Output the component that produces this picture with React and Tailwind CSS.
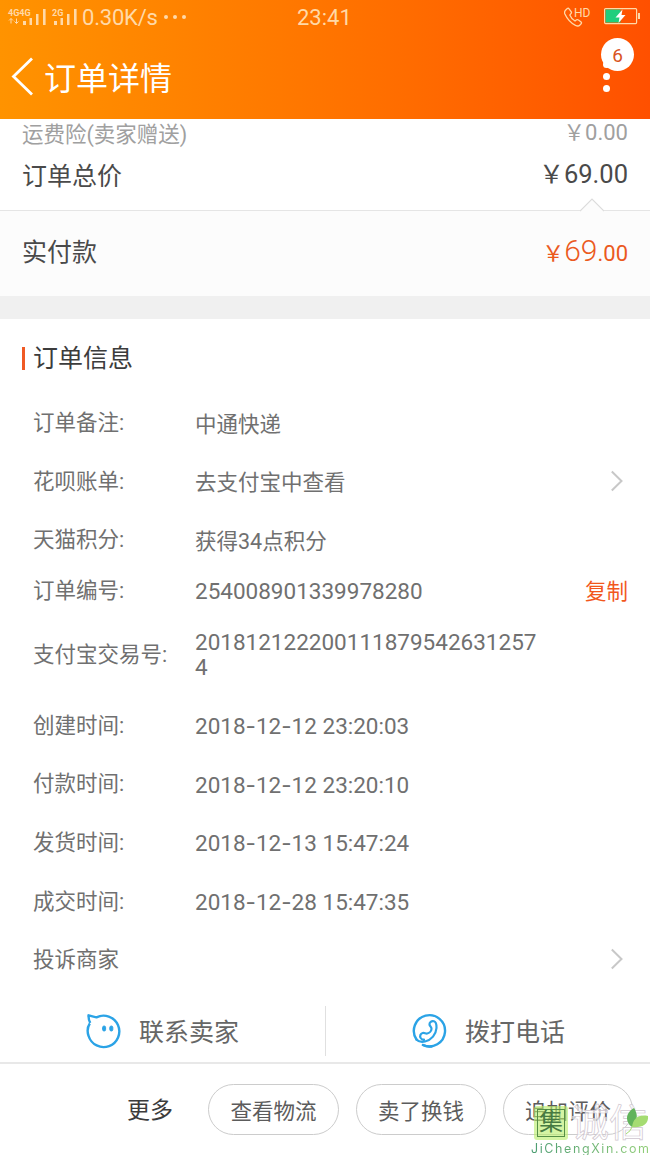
import React from 'react';

const orderRows = [
  { label: '订单备注:', value: '中通快递', height: 'h-[58px]' },
  { label: '花呗账单:', value: '去支付宝中查看', height: 'h-[59px]', arrow: true },
  { label: '天猫积分:', value: '获得34点积分', height: 'h-[58px]' },
  { label: '订单编号:', value: '254008901339978280', height: 'h-11', action: '复制', numeric: true },
  { label: '支付宝交易号:', value: '2018121222001118795426312574', height: 'h-[83px]', numeric: true },
  { label: '创建时间:', value: '2018-12-12 23:20:03', height: 'h-[59px]', numeric: true },
  { label: '付款时间:', value: '2018-12-12 23:20:10', height: 'h-[58px]', numeric: true },
  { label: '发货时间:', value: '2018-12-13 15:47:24', height: 'h-[59px]', numeric: true },
  { label: '成交时间:', value: '2018-12-28 15:47:35', height: 'h-[59px]', numeric: true },
  { label: '投诉商家', value: '', height: 'h-[58px]', arrow: true },
];

const Signal = () => (
  <svg className="w-[23px] h-4" viewBox="0 0 23 16" fill="currentColor">
    <rect x="0" y="12" width="3" height="4" />
    <rect x="6.500" y="9" width="2.500" height="7" />
    <rect x="13" y="5" width="2.500" height="11" />
    <rect x="20" y="0" width="2.600" height="16" />
  </svg>
);

const StatusBar = () => (
  <div className="grid grid-cols-[289px_1fr_78px] h-[34px] items-center text-[#ffd9a8]">
    <div className="flex items-center pl-2">
      <div className="flex flex-col w-[15px] h-4 text-[9px] leading-[8px] font-bold">
        <span className="whitespace-nowrap">4G4G</span>
        <svg className="w-3 h-2" viewBox="0 0 12 8" fill="none" stroke="currentColor" strokeWidth="1">
          <path d="M3 1.500v5M1 3.500l2-2 2 2M8.500 1.500v5M6.500 4.500l2 2 2-2" />
        </svg>
      </div>
      <Signal />
      <div className="flex h-4 ml-[6px]">
        <span className="w-0 text-[9px] leading-[8px] font-bold">2G</span>
        <span className="pl-[2px]"><Signal /></span>
      </div>
      <span className="ml-[5px] text-[22px] whitespace-nowrap tracking-[-0.2px]">0.30K/s</span>
      <span className="flex gap-[5px] ml-[6px]">
        <i className="w-1 h-1 rounded-full bg-current" />
        <i className="w-1 h-1 rounded-full bg-current" />
        <i className="w-1 h-1 rounded-full bg-current" />
      </span>
    </div>
    <div className="pl-2 pt-[1px] text-[22px]">23:41</div>
    <div className="flex -ml-2 items-start gap-[12px]">
      <div className="flex w-[28px] h-5">
        <svg className="w-5 h-5 shrink-0" viewBox="0 0 20 20" fill="none" stroke="currentColor">
          <path
            d="M1.500 3.200L3.300 1.500Q4.300 .8 5.100 1.800l2.200 3.100q.5 1-.4 1.800L5.800 8c1 2.500 2.900 4.700 5.200 6l1.600-1.200q1-.6 1.900.2l2.600 2q.8.8 0 1.700l-1.400 1.500c-1 1-2.700.9-4.200.2C6.700 16 3.100 11.800.9 7c-.6-1.500-.4-2.700.6-3.800z"
            strokeWidth="1.300"
          />
        </svg>
        <span className="-ml-[10px] text-[12px] leading-3 whitespace-nowrap">HD</span>
      </div>
      <svg className="w-9 h-[18px]" viewBox="0 0 36 18">
        <rect x=".6" y="1.600" width="32" height="15" rx="1" fill="none" stroke="#ffd9a8" strokeWidth="1.200" />
        <rect x="1.500" y="2.500" width="15" height="13" fill="#1fce7d" />
        <rect x="34" y="6" width="2" height="6" fill="#ffd9a8" />
        <path d="M18.500 2.500l-7 8h4l-1 5.500 7-8h-4z" fill="#fff" />
      </svg>
    </div>
  </div>
);

const Header = () => (
  <header className="h-[119px] bg-linear-to-r from-[#ff9300] to-[#ff5000] text-white">
    <StatusBar />
    <div className="flex items-center justify-between h-[85px] pl-[11px]">
      <div className="flex items-center">
        <svg className="w-[22px] h-10" viewBox="0 0 22 40" fill="none" stroke="#fff" strokeWidth="2.800">
          <path d="M21 1.500L2.500 19.500L21 37.500" />
        </svg>
        <h1 className="ml-[11px] mt-[4px] text-[32px] leading-10">订单详情</h1>
      </div>
      <div className="relative w-[49px] h-[85px]">
        <i className="absolute left-[2px] top-[27px] w-[7px] h-[7px] rounded-full bg-white" />
        <span className="absolute left-0 top-[4px] w-[33px] h-[33px] rounded-full bg-white text-[#d9541f] text-[19px] leading-[35px] text-center">
          6
        </span>
        <i className="absolute left-[2px] top-[39px] w-[7px] h-[7px] rounded-full bg-white" />
        <i className="absolute left-[2px] top-[51px] w-[7px] h-[7px] rounded-full bg-white" />
      </div>
    </div>
  </header>
);

const ChevronRight = () => (
  <svg className="w-3 h-[22px]" viewBox="0 0 12 22" fill="none" stroke="#c8c8c8" strokeWidth="2">
    <path d="M.8 1.500L10.500 11L.8 20.500" />
  </svg>
);

const PriceSummary = () => (
  <section>
    <div className="relative h-[92px] px-[22px] border-b border-[#e5e5e5]">
      <div className="flex justify-between h-[31px] text-[21.500px] leading-[31px] text-[#a0a0a0]">
        <span>运费险(卖家赠送)</span>
        <span className="-mt-[2px]">￥<span className="text-[22px]">0.00</span></span>
      </div>
      <div className="flex justify-between h-[50px] text-[25px] leading-[50px] text-[#4a4a4a]">
        <span className="mt-[2px]">订单总价</span>
        <span className="-mt-[1px]">￥<span className="text-[25.500px]">69.00</span></span>
      </div>
      <svg className="absolute left-[580px] bottom-[-2px] w-6 h-[14px]" viewBox="0 0 24 14">
        <path d="M0 13L12 1L24 13V14H0z" fill="#fcfcfc" />
        <path d="M0 13L12 1L24 13" fill="none" stroke="#dcdcdc" strokeWidth="1.200" />
      </svg>
    </div>
    <div className="flex justify-between h-[85px] px-[22px] leading-[83px] bg-[#fcfcfc]">
      <span className="text-[25px] text-[#4a4a4a]">实付款</span>
      <span className="-mt-[2px] text-[22px] text-[#eb5a1e]">￥<span className="text-[30px] font-light">69</span>.00</span>
    </div>
    <div className="h-[23px] bg-[#f0f0f0]" />
  </section>
);

// Roboto's hyphen is too narrow between digits, so dates borrow Inter's
const NumericValue = ({ value }) => (
  <span className="w-[345px] mt-[1px] text-[22.500px] leading-[25px] break-all">
    {value.split('-').map((part, i) => (
      <React.Fragment key={i}>
        {i > 0 && <span className="font-[Inter]">-</span>}
        {part}
      </React.Fragment>
    ))}
  </span>
);

const OrderRow = ({ label, value, height, arrow, action, numeric }) => (
  <div className={`flex items-center pl-[33px] pr-[22px] text-[21.500px] text-[#707070] ${height}`}>
    <span className="w-[162px] shrink-0 mt-[1px]">{label}</span>
    {numeric ? (
      <NumericValue value={value} />
    ) : (
      <span className="w-[345px] mt-[2px] leading-[25px]">{value}</span>
    )}
    {arrow && <span className="ml-auto mr-[5px] -mt-[2px] flex"><ChevronRight /></span>}
    {action && <span className="ml-auto mt-[2px] text-[#f2571d]">{action}</span>}
  </div>
);

const OrderInfo = () => (
  <section className="h-[687px]">
    <div className="flex items-center gap-2 h-[75px] pl-[22px] pt-[3px]">
      <i className="w-[3px] h-[23px] bg-[#f05a24]" />
      <h2 className="mt-[1px] text-[25px] leading-9 text-[#3c3c3c]">订单信息</h2>
    </div>
    <div>
      {orderRows.map((row) => (
        <OrderRow key={row.label} {...row} />
      ))}
    </div>
  </section>
);

const ContactBar = () => (
  <div className="grid grid-cols-2 h-[58px] border-b-2 border-[#e8e8e8] text-[25px] text-[#666]">
    <div className="flex items-center h-[50px] w-[326px] pl-[86px] border-r border-[#e0e0e0]">
      <svg className="w-9 h-9" viewBox="0 0 36 36" fill="none" stroke="#2ba3e6" strokeWidth="2.400">
        <path d="M3.800 10.500C1.500 14 1.200 19 2.600 23a15.700 15.700 0 1 0 7.800-18.600C8 4 5.200 3 2.500 2.300c0 3 .5 5.700 1.800 7.700" strokeLinejoin="round" />
        <rect x="16.600" y="13" width="3" height="5" rx="1.500" fill="#2ba3e6" strokeWidth="1" />
        <rect x="23.800" y="13" width="3" height="5" rx="1.500" fill="#2ba3e6" strokeWidth="1" />
      </svg>
      <span className="ml-[17px] mt-1">联系卖家</span>
    </div>
    <div className="flex items-center h-[50px] pl-[87px]">
      <svg className="w-9 h-9" viewBox="0 0 36 36" fill="none" stroke="#2ba3e6" strokeWidth="2.400" strokeLinecap="round">
        <path d="M4.500 26.500A15.600 15.600 0 1 1 11 32" />
        <path d="M11 32c2.300 1.300 5.500 1.800 8.500 1.500" />
        <path
          d="M4.500 26.500c2 2.300 5 2.800 8.500 2 6.500-1.500 11-7 11.500-13.500.1-3-.3-6-2.500-6.700-2.500-.8-4.800 1-4.500 3.200.2 1.700 2 2.300 2 4.300 0 2.200-2.200 4.300-4.300 4.700-1.700.3-2.700-1-4.500-.5-2.300.6-3.200 3-2 5 .8 1.200 2 1.800 3.300 1.700"
          strokeWidth="2.200"
        />
      </svg>
      <span className="ml-[17px] mt-1">拨打电话</span>
    </div>
  </div>
);

const Watermark = () => (
  <div className="absolute left-[530px] top-[1106px] w-[120px] h-[49px] pointer-events-none">
    <div className="flex h-[36px]">
      <span className="w-[34px] h-[34px] p-[3px] rounded-[3px] bg-[#b8ed65]/60 ml-[4px]">
        <span className="block w-7 h-7 border border-[#568f46] text-[24px] leading-[25px] text-center text-[#477a42]">
          集
        </span>
      </span>
      <span className="ml-[3px] text-[38px] leading-[34px] text-white/70 [-webkit-text-stroke:0.7px_#cfc6cf] whitespace-nowrap">
        诚信
      </span>
    </div>
    <svg className="absolute left-[96px] top-[1px] w-6 h-7" viewBox="0 0 24 28">
      <path d="M8 1C-1 6-1 15 6 20C12 14 12 7 8 1z" fill="#62b35b" />
      <path d="M22 9C12 7 7 12 6 20c9 1 17-2 16-11z" fill="#a5dc72" />
      <path d="M6 20q-1 4-6 7" stroke="#a5dc72" fill="none" />
    </svg>
    <p className="w-[120px] pl-[1px] text-[12.500px] leading-[14px] tracking-[1.600px] font-[Inter] bg-linear-to-r from-[#4a9c71] to-[#93cf79] bg-clip-text text-transparent whitespace-nowrap">
      JiChengXin.com
    </p>
  </div>
);

const Footer = () => (
  <footer className="flex h-[91px] items-start pt-[20px] pl-[127px] text-[#5c5c5c]">
    <span className="w-[81px] text-[23px] leading-[54px] text-[#3c3c3c]">更多</span>
    <div className="flex gap-[17px] text-[21.500px] leading-[51px] text-center">
      <button className="w-[131px] h-[51px] pt-[1px] border border-[#ccc] rounded-full">查看物流</button>
      <button className="w-[130px] h-[51px] pt-[1px] border border-[#ccc] rounded-full">卖了换钱</button>
      <button className="w-[130px] h-[51px] pt-[1px] border border-[#ccc] rounded-full">追加评价</button>
    </div>
  </footer>
);

export default function App() {
  return (
    <div className="relative w-[650px] h-[1155px] overflow-hidden bg-white font-[Roboto,'Noto_Sans_CJK_SC',sans-serif]">
      <Header />
      <PriceSummary />
      <OrderInfo />
      <ContactBar />
      <Footer />
      <Watermark />
    </div>
  );
}
